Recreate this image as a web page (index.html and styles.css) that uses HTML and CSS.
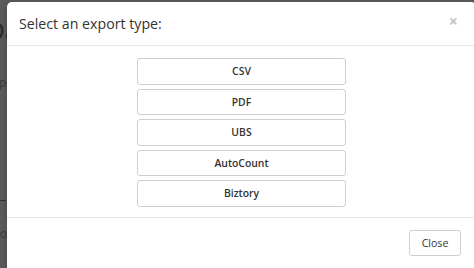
FILE: index.html
```html
<!DOCTYPE html>
<html>
<head>
<meta charset="utf-8">
<link rel="stylesheet" href="styles.css">
</head>
<body>
<div class="page">
  <div class="bg-title">Data</div>
  <div class="bg-text">Export your records</div>
  <div class="bg-rule"></div>
  <div class="bg-text bg-low">Tools</div>
</div>
<div class="modal">
  <div class="modal-header">
    <h4 class="modal-title">Select an export type:</h4>
    <span class="close">&times;</span>
  </div>
  <div class="modal-body">
    <button class="btn">CSV</button>
    <button class="btn">PDF</button>
    <button class="btn">UBS</button>
    <button class="btn">AutoCount</button>
    <button class="btn">Biztory</button>
  </div>
  <div class="modal-footer">
    <button class="btn btn-close">Close</button>
  </div>
</div>
</body>
</html>
```
FILE: styles.css
```css
html, body {
  margin: 0;
  padding: 0;
  width: 474px;
  height: 268px;
  overflow: hidden;
  background: #5b5b5b;
  font-family: "Open Sans", "Liberation Sans", sans-serif;
}
.page {
  padding: 14px 0 0 0;
  margin-left: -14px;
  color: #2a2a2a;
}
.bg-title {
  font-size: 26px;
  line-height: 32px;
}
.bg-text {
  font-size: 12px;
  line-height: 18px;
  margin-top: 28px;
  color: #3a3a3a;
}
.bg-rule {
  margin-top: 108px;
  height: 1px;
  width: 20px;
  background: #2f2f2f;
}
.bg-low {
  margin-top: 24px;
}
.modal {
  position: absolute;
  left: 7px;
  top: 2px;
  width: 469px;
  height: 266px;
  overflow: hidden;
  background: #fff;
  border-radius: 5px 5px 0 0;
  box-shadow: 0 2px 6px rgba(0,0,0,0.25);
}
.modal-header {
  display: flex;
  justify-content: space-between;
  align-items: center;
  padding: 0 18px 0 12px;
  height: 43px;
  border-bottom: 1px solid #e5e5e5;
}
.modal-title {
  margin: 0;
  font-size: 14.2px;
  font-weight: 400;
  color: #333;
}
.close {
  font-size: 16px;
  font-weight: 700;
  color: #c4c4c4;
  line-height: 1;
  margin-top: -5px;
}
.modal-body {
  display: flex;
  flex-direction: column;
  align-items: center;
  gap: 4px;
  padding: 12px 0 10px 0;
}
.btn {
  box-sizing: border-box;
  width: 209px;
  height: 26.5px;
  background: #fff;
  border: 1px solid #cfcfcf;
  border-radius: 3px;
  font-family: "Open Sans", "Liberation Sans", sans-serif;
  font-size: 10.4px;
  font-weight: 600;
  color: #333;
  padding: 0;
}
.modal-footer {
  display: flex;
  justify-content: flex-end;
  border-top: 1px solid #e5e5e5;
  padding: 12px 15px 0 0;
}
.btn-close {
  width: 52px;
  height: 26px;
  font-weight: 400;
  font-size: 10.6px;
}
```
